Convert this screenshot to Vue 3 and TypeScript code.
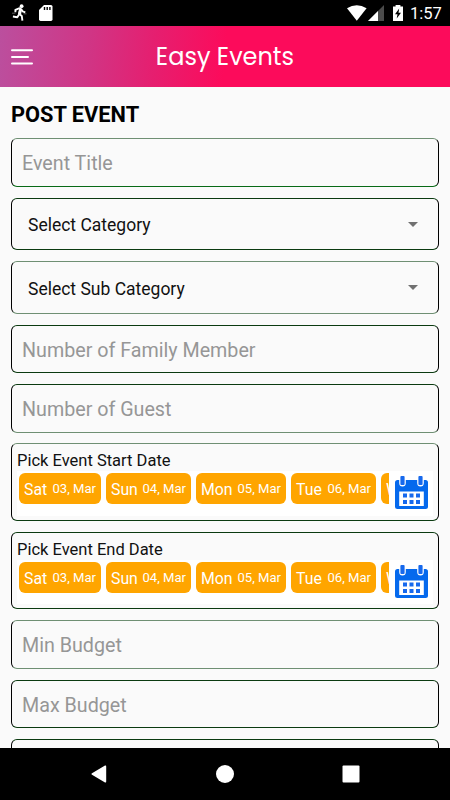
<script setup lang="ts">
interface DateChip {
  day: string
  date: string
  cls: string
}

interface Field {
  kind: 'input' | 'select' | 'date'
  label: string
  cls: string
}

const chips: DateChip[] = [
  { day: 'Sat', date: '03, Mar', cls: 'chip-sat' },
  { day: 'Sun', date: '04, Mar', cls: 'chip-sun' },
  { day: 'Mon', date: '05, Mar', cls: 'chip-mon' },
  { day: 'Tue', date: '06, Mar', cls: 'chip-tue' },
  { day: 'W', date: '', cls: 'chip-wed' },
]

const fields: Field[] = [
  { kind: 'input', label: 'Event Title', cls: 'h49 top-soft bottom-green' },
  { kind: 'select', label: 'Select Category', cls: 'h52' },
  { kind: 'select', label: 'Select Sub Category', cls: 'h53 top-soft bottom-soft' },
  { kind: 'input', label: 'Number of Family Member', cls: 'h48' },
  { kind: 'input', label: 'Number of Guest', cls: 'h49 tight bottom-soft' },
  { kind: 'date', label: 'Pick Event Start Date', cls: 'h78 top-soft' },
  { kind: 'date', label: 'Pick Event End Date', cls: 'h77' },
  { kind: 'input', label: 'Min Budget', cls: 'h49 top-soft bottom-soft' },
  { kind: 'input', label: 'Max Budget', cls: 'h48' },
  { kind: 'input', label: '', cls: 'h48' },
]
</script>

<template>
  <div class="screen">
    <div class="status">
      <svg class="runner" viewBox="0 0 16 18">
        <circle cx="9.6" cy="2.2" r="1.9" fill="#fff" />
        <path d="M3.4 8.2V5.8L7.6 4.2L9.3 5.2L10.7 7.4L13.3 8.3M8.2 5L7 9.8L9.8 12L10.4 16.6M7 10.4L5.3 13.2L.9 12.5" fill="none" stroke="#fff" stroke-width="1.9" stroke-linejoin="round" />
        <path d="M7.2 4.6L10 5.5L9 10.8L6.2 10Z" fill="#fff" />
        <path d="M0 9.2H3.4M11.5 9.8H14.5" stroke="#888" stroke-width=".7" />
      </svg>
      <svg class="sd" viewBox="0 0 14 16">
        <path d="M5 0H12Q13.5 0 13.5 1.5V14.3Q13.5 16 12 16H1.6Q0 16 0 14.3V5Z" fill="#fff" />
        <path d="M5.5 2V5M8.2 2V5M10.9 2V5" stroke="#000" stroke-width="1.4" />
      </svg>
      <span class="grow"></span>
      <svg class="wifi" viewBox="0 0 20 16">
        <path d="M0 3.3Q9.8-3 19.6 3.3L9.8 15.8Z" fill="#fff" />
      </svg>
      <svg class="signal" viewBox="0 0 16 16">
        <path d="M0 16L16 0V16Z" fill="#4b4b4b" />
        <path d="M0 16L10 6V16Z" fill="#fff" />
      </svg>
      <svg class="battery" viewBox="0 0 10 16">
        <path d="M0 1.5H2.6V0H7.4V1.5H10V16H0Z" fill="#fff" />
        <path d="M6.2 3.6L2 9.3H4.5L3.7 13.5L8 7.8H5.5Z" fill="#000" />
      </svg>
      <span class="clock">1:57</span>
    </div>

    <header class="bar">
      <svg class="menu" viewBox="0 0 22 18">
        <path d="M1 2.3H21M1 9H17M1 15.5H21" stroke="#fff" stroke-width="2" stroke-linecap="round" />
      </svg>
      <h1 class="title">Easy Events</h1>
    </header>

    <main class="content">
      <h2 class="heading">POST EVENT</h2>
      <div v-for="(f, i) in fields" :key="i" class="field" :class="[f.kind, f.cls]">
        <template v-if="f.kind === 'date'">
          <div class="date-label">{{ f.label }}</div>
          <div class="picker">
            <div class="strip">
              <div v-for="c in chips" :key="c.day" class="chip" :class="c.cls">
                <span class="day">{{ c.day }}</span>
                <span class="date-text">{{ c.date }}</span>
              </div>
            </div>
            <svg class="calendar" viewBox="0 0 33 34">
              <path d="M2.5 5H30.5Q33 5 33 7.5V31.5Q33 34 30.5 34H2.5Q0 34 0 31.5V7.5Q0 5 2.5 5Z" fill="#0569ed" />
              <path d="M4.2 16.5H28.8V31H4.2Z" fill="#fff" />
              <path d="M4.2 3V8Q4.2 11.5 7.5 11.5Q10.8 11.5 10.8 8V3ZM22.2 3V8Q22.2 11.5 25.5 11.5Q28.8 11.5 28.8 8V3Z" fill="#fff" />
              <rect x="5.4" y="1" width="4.2" height="9" rx="1" fill="#1769ed" />
              <rect x="23.4" y="1" width="4.2" height="9" rx="1" fill="#1769ed" />
              <path d="M8 18.5h4v4h-4zM14.5 18.5h4v4h-4zM21 18.5h4v4h-4zM8 25h4v4h-4zM14.5 25h4v4h-4zM21 25h4v4h-4z" fill="#1769ed" />
            </svg>
          </div>
        </template>
        <template v-else>
          <span class="label">{{ f.label }}</span>
          <svg v-if="f.kind === 'select'" class="caret" viewBox="0 0 10 5">
            <path d="M0 0H10L5 5Z" fill="#707070" />
          </svg>
        </template>
      </div>
    </main>

    <nav class="nav">
      <svg viewBox="0 0 18 18"><path d="M2 8.2L15 .6Q16.2 0 16.2 1.4V16.6Q16.2 18 15 17.4L2 9.8Q.6 9 2 8.2Z" fill="#fff" /></svg>
      <svg viewBox="0 0 18 18"><circle cx="9" cy="9" r="9" fill="#fff" /></svg>
      <svg viewBox="0 0 18 18"><rect x=".5" y=".5" width="17" height="17" rx="1" fill="#fff" /></svg>
    </nav>
  </div>
</template>

<style>
body {
  margin: 0;
  overflow: hidden;
}
</style>

<style scoped>
.screen {
  width: 450px;
  height: 800px;
  display: flex;
  flex-direction: column;
  overflow: hidden;
  background: #fafafa;
  font-family: Roboto, sans-serif;
  color: #111;
}
svg {
  display: block;
  flex: none;
}
.status {
  height: 26px;
  flex: none;
  box-sizing: border-box;
  padding: 0 9px 0 12px;
  display: flex;
  align-items: center;
  background: #000;
  color: #fff;
}
.runner {
  width: 16px;
  height: 18px;
}
.sd {
  width: 14px;
  height: 16px;
  margin-left: 11px;
}
.grow {
  flex: 1;
}
.wifi {
  width: 20px;
  height: 16px;
}
.signal {
  width: 16px;
  height: 16px;
  margin-left: 1px;
}
.battery {
  width: 10px;
  height: 16px;
  margin-left: 9px;
}
.clock {
  width: 31px;
  margin-left: 7px;
  font-size: 16.5px;
  line-height: 26px;
  padding-top: 2px;
  white-space: nowrap;
}
.bar {
  height: 61px;
  flex: none;
  box-sizing: border-box;
  padding: 0 11px;
  display: grid;
  grid-template-columns: 22px 1fr 22px;
  align-items: center;
  background: linear-gradient(95deg, #bb4f9e 0%, #d03585 20%, #e51f70 34%, #fc0b5b 50%, #fc0b5b 100%);
}
.menu {
  width: 22px;
  height: 18px;
}
.title {
  margin: 0;
  text-align: center;
  font-family: Poppins, Lato, sans-serif;
  font-size: 24px;
  font-weight: 400;
  line-height: 61px;
  color: #fff;
}
.content {
  flex: 1;
  min-height: 0;
  overflow: hidden;
  box-sizing: border-box;
  padding: 0 11px;
  display: flex;
  flex-direction: column;
  gap: 11px;
}
.heading {
  flex: none;
  height: 40px;
  margin: 0;
  padding-top: 12px;
  box-sizing: border-box;
  font-size: 21.8px;
  line-height: 31px;
  font-weight: 700;
  color: #000;
  white-space: nowrap;
}
.field {
  flex: none;
  box-sizing: border-box;
  display: flex;
  align-items: center;
  border: 1px solid #000;
  border-top-color: #0b3a10;
  border-bottom-color: #0b3a10;
  border-radius: 6px;
}
.h48 { height: 48px; }
.h49 { height: 49px; }
.h52 { height: 52px; }
.h53 { height: 53px; }
.h77 { height: 77px; }
.h78 { height: 78px; }
.tight { margin-bottom: -1px; }
.top-soft { border-top-color: #6f8f73; }
.bottom-soft { border-bottom-color: #6f8f73; }
.bottom-green { border-bottom-color: #086a16; }
.input {
  padding-left: 10px;
  font-size: 19.7px;
  color: #969696;
}
.select {
  padding: 0 20px 0 16px;
  justify-content: space-between;
  font-size: 17.5px;
}
.label {
  padding-top: 2px;
  white-space: nowrap;
}
.caret {
  width: 10px;
  height: 5px;
}
.date {
  flex-direction: column;
  align-items: stretch;
  padding: 7px 5px 4px;
}
.date-label {
  height: 20px;
  line-height: 20px;
  font-size: 16.5px;
  white-space: nowrap;
}
.picker {
  flex: 1;
  min-height: 0;
  display: flex;
  gap: 6px;
  background: #fff;
}
.strip {
  width: 372px;
  box-sizing: border-box;
  padding: 2px 0 0 2px;
  overflow: hidden;
  display: flex;
  align-items: flex-start;
  gap: 5px;
}
.chip {
  flex: none;
  height: 31px;
  box-sizing: border-box;
  padding: 0 5px;
  border-radius: 6px;
  display: flex;
  justify-content: space-between;
  background: #ffa500;
  color: #fff;
  white-space: nowrap;
}
.chip-sat { width: 82px; }
.chip-sun { width: 85px; }
.chip-mon { width: 90px; }
.chip-tue { width: 85px; }
.chip-wed { width: 90px; }
.day {
  font-size: 15.8px;
  line-height: 33px;
}
.date-text {
  font-size: 13.1px;
  line-height: 31px;
}
.calendar {
  width: 33px;
  height: 34px;
  margin-top: 4px;
}
.nav {
  height: 52px;
  flex: none;
  box-sizing: border-box;
  padding: 0 90px 0 90px;
  display: flex;
  align-items: center;
  justify-content: space-between;
  background: #000;
}
.nav svg {
  width: 18px;
  height: 18px;
}
</style>
